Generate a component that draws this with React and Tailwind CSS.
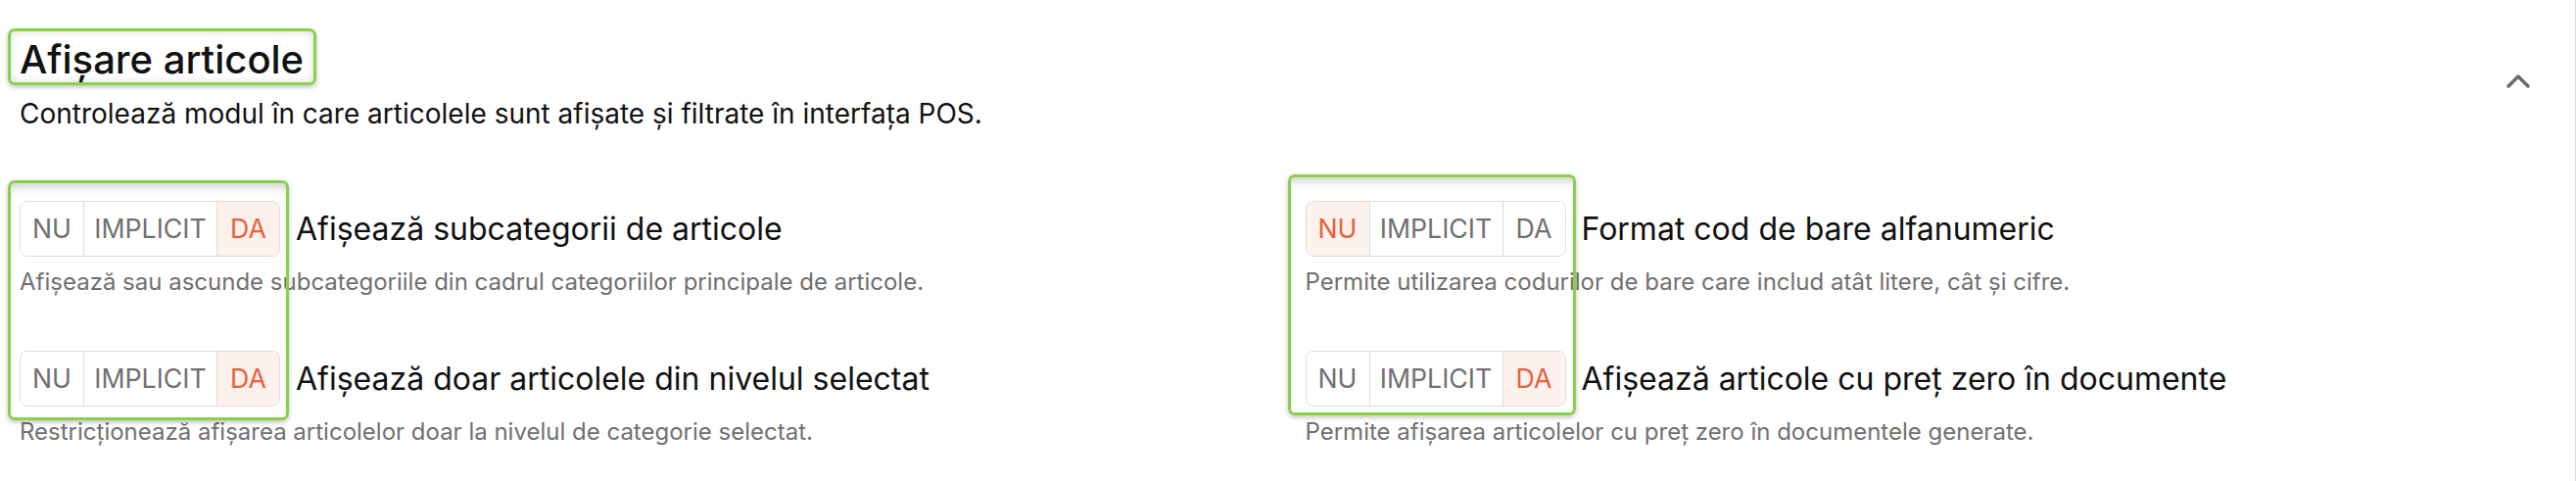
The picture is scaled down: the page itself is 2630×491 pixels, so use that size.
import React from 'react';
import { ChevronUp } from 'lucide-react';

const settings = [
  {
    title: 'Afișează subcategorii de articole',
    desc: 'Afișează sau ascunde subcategoriile din cadrul categoriilor principale de articole.',
    value: 'DA',
  },
  {
    title: 'Format cod de bare alfanumeric',
    desc: 'Permite utilizarea codurilor de bare care includ atât litere, cât și cifre.',
    value: 'NU',
  },
  {
    title: 'Afișează doar articolele din nivelul selectat',
    desc: 'Restricționează afișarea articolelor doar la nivelul de categorie selectat.',
    value: 'DA',
  },
  {
    title: 'Afișează articole cu preț zero în documente',
    desc: 'Permite afișarea articolelor cu preț zero în documentele generate.',
    value: 'DA',
  },
];

function Segment({ label, active, className }) {
  return (
    <button
      className={
        'h-full flex items-center justify-center text-[26.7px] ' +
        className +
        (active ? ' bg-[#fdf1ed] text-[#e8603c]' : ' bg-white text-[#707070]')
      }
    >
      {label}
    </button>
  );
}

function Toggle({ value }) {
  return (
    <div className="inline-flex h-[57px] shrink-0 rounded-[8px] border border-[#dcdcdc] overflow-hidden">
      <Segment label="NU" active={value === 'NU'} className="w-[64px]" />
      <Segment label="IMPLICIT" active={value === 'IMPLICIT'} className="w-[137px] border-x border-[#dcdcdc]" />
      <Segment label="DA" active={value === 'DA'} className="w-[63px]" />
    </div>
  );
}

export default function App() {
  return (
    <div
      className="relative w-full h-[491px] bg-white border-r border-[#dddddd] overflow-hidden"
      style={{ fontFamily: 'Inter, "Noto Sans", sans-serif' }}
    >
      <div className="flex items-center justify-between pl-[20px] pr-[38px] pt-[34px]">
        <div>
          <h2 className="text-[40px] leading-[53px] font-medium text-[#111]">Afișare articole</h2>
          <p className="mt-[9px] text-[28px] leading-[40px] text-[#111]">
            Controlează modul în care articolele sunt afișate și filtrate în interfața POS.
          </p>
        </div>
        <ChevronUp size={40} strokeWidth={2.1} className="text-[#6b6b6b] mt-[-4px]" />
      </div>

      <div className="grid grid-cols-2 gap-x-[36px] gap-y-[54px] px-[20px] mt-[69px]">
        {settings.map((s) => (
          <div key={s.title}>
            <div className="flex items-center gap-[16px]">
              <Toggle value={s.value} />
              <span className="text-[32px] leading-[44px] text-[#111]">{s.title}</span>
            </div>
            <p className="mt-[9px] text-[24px] leading-[33px] text-[#707070]">{s.desc}</p>
          </div>
        ))}
      </div>

      {/* highlight overlays */}
      <div className="absolute left-[8px] top-[29px] w-[315px] h-[58px] rounded-[7px] border-[3px] border-[#8bd04c] shadow-[0_2px_5px_rgba(0,0,0,0.25),inset_0_0_8px_rgba(0,0,0,0.15)] pointer-events-none" />
      <div className="absolute left-[8px] top-[184px] w-[287px] h-[245px] rounded-[7px] border-[3px] border-[#8bd04c] shadow-[0_2px_5px_rgba(0,0,0,0.25),inset_0_10px_10px_-6px_rgba(0,0,0,0.18)] pointer-events-none" />
      <div className="absolute left-[1315px] top-[178px] w-[294px] h-[246px] rounded-[7px] border-[3px] border-[#8bd04c] shadow-[0_2px_5px_rgba(0,0,0,0.25),inset_0_10px_10px_-6px_rgba(0,0,0,0.18)] pointer-events-none" />
    </div>
  );
}
